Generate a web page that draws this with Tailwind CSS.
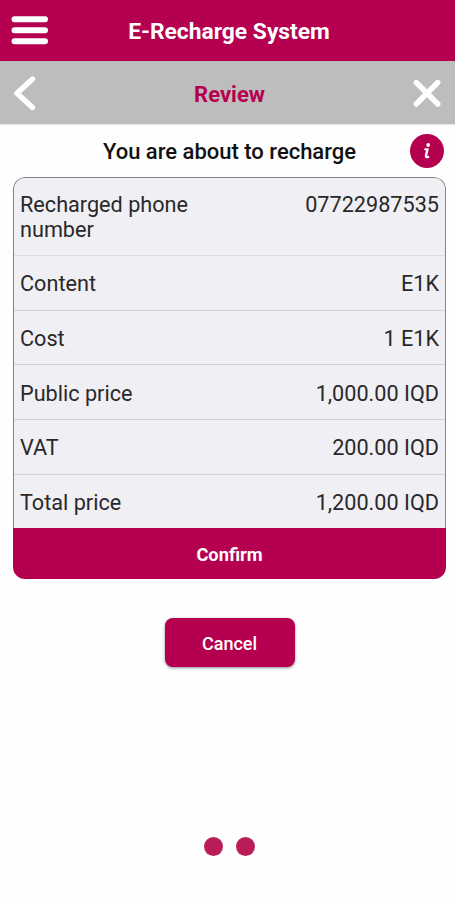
<!DOCTYPE html>
<html lang="en">
<head>
<meta charset="utf-8">
<title>E-Recharge System</title>
<script src="https://cdn.jsdelivr.net/npm/@tailwindcss/browser@4"></script>
</head>
<body class="bg-white font-['Roboto',sans-serif]">
<div class="flex h-[900px] w-[455px] flex-col overflow-hidden bg-[#fefefe]">
  <header class="grid h-[61px] shrink-0 grid-cols-[63px_1fr_60px] items-center bg-[#b4004e]">
    <button class="pl-[11px]" aria-label="Menu">
      <svg class="block" width="38" height="30" viewBox="0 0 38 30" fill="none" stroke="#fff" stroke-width="6" stroke-linecap="round"><path d="M3.5 3.2H34M3.5 14.2H34M3.5 25.2H34"/></svg>
    </button>
    <h1 class="pt-0.5 text-center text-[22.8px] font-bold leading-7 text-white">E-Recharge System</h1>
  </header>
  <nav class="grid h-16 shrink-0 grid-cols-[64px_1fr_60px] items-center border-b border-[#e4e4e4] bg-[#bdbdbd]">
    <button class="pl-[13px]" aria-label="Back">
      <svg class="block" width="24" height="36" viewBox="0 0 24 36" fill="none" stroke="#fff" stroke-width="5.4" stroke-linecap="round" stroke-linejoin="round"><path d="M19.5 4L4 18.3L19.5 32.5"/></svg>
    </button>
    <h2 class="pt-1 text-center text-[22px] font-bold leading-7 text-[#b4004e]">Review</h2>
    <button class="pl-[17px]" aria-label="Close">
      <svg class="block" width="30" height="30" viewBox="0 0 30 30" fill="none" stroke="#fff" stroke-width="5.4" stroke-linecap="round"><path d="M4.3 4.5L25.8 26M25.8 4.5L4.3 26"/></svg>
    </button>
  </nav>
  <main class="flex flex-col pl-[13px] pr-[9px]">
    <div class="grid h-[52px] grid-cols-[36px_1fr_36px] items-center">
      <h3 class="col-start-2 pt-0.5 text-center text-[22px] font-medium leading-7 text-[#111]">You are about to recharge</h3>
      <svg class="-ml-px block" width="36" height="36" viewBox="0 0 36 36" fill="none"><circle cx="18" cy="18" r="17" fill="#b4004e"/><circle cx="19.2" cy="12" r="1.9" fill="#fff"/><path d="M16.3 16.3H18.6L16.9 22.6Q16.6 24.7 19.2 23.9" stroke="#fff" stroke-width="2.3" stroke-linecap="round" stroke-linejoin="round"/></svg>
    </div>
    <section class="flex h-[402px] flex-col overflow-hidden rounded-xl text-[21.65px] leading-[25px] text-[#292929]">
      <dl class="h-[351px] rounded-t-xl border border-b-0 border-[#858585] bg-[#f0eff4]">
        <div class="flex h-[78px] justify-between border-b border-[#dcdbe0] px-1.5 pt-[14px]"><dt class="w-[190px]">Recharged phone number</dt><dd>07722987535</dd></div>
        <div class="flex h-[55px] items-center justify-between border-b border-[#d5d4d9] px-1.5"><dt>Content</dt><dd>E1K</dd></div>
        <div class="flex h-[54px] items-center justify-between border-b border-[#d5d4d9] px-1.5 pt-0.5"><dt>Cost</dt><dd>1 E1K</dd></div>
        <div class="flex h-[55px] items-center justify-between border-b border-[#d5d4d9] px-1.5 pt-0.5"><dt>Public price</dt><dd>1,000.00 IQD</dd></div>
        <div class="flex h-[55px] items-center justify-between border-b border-[#d5d4d9] px-1.5"><dt>VAT</dt><dd>200.00 IQD</dd></div>
        <div class="flex h-[54px] items-center justify-between px-1.5"><dt>Total price</dt><dd>1,200.00 IQD</dd></div>
      </dl>
      <button class="flex-1 bg-[#b4004e] pt-0.5 text-center text-[18.3px] font-bold text-white">Confirm</button>
    </section>
    <button class="mt-[39px] h-[49px] w-[130px] self-center rounded-lg bg-[#b4004e] pt-0.5 text-[18px] font-medium text-white shadow-[0_1px_3px_rgba(0,0,0,0.45)]">Cancel</button>
  </main>
  <div class="mt-[170px] flex justify-center gap-[13px] pl-[4px]">
    <span class="size-[19px] rounded-full bg-[#b91c58]"></span>
    <span class="size-[19px] rounded-full bg-[#b91c58]"></span>
  </div>
</div>
</body>
</html>
